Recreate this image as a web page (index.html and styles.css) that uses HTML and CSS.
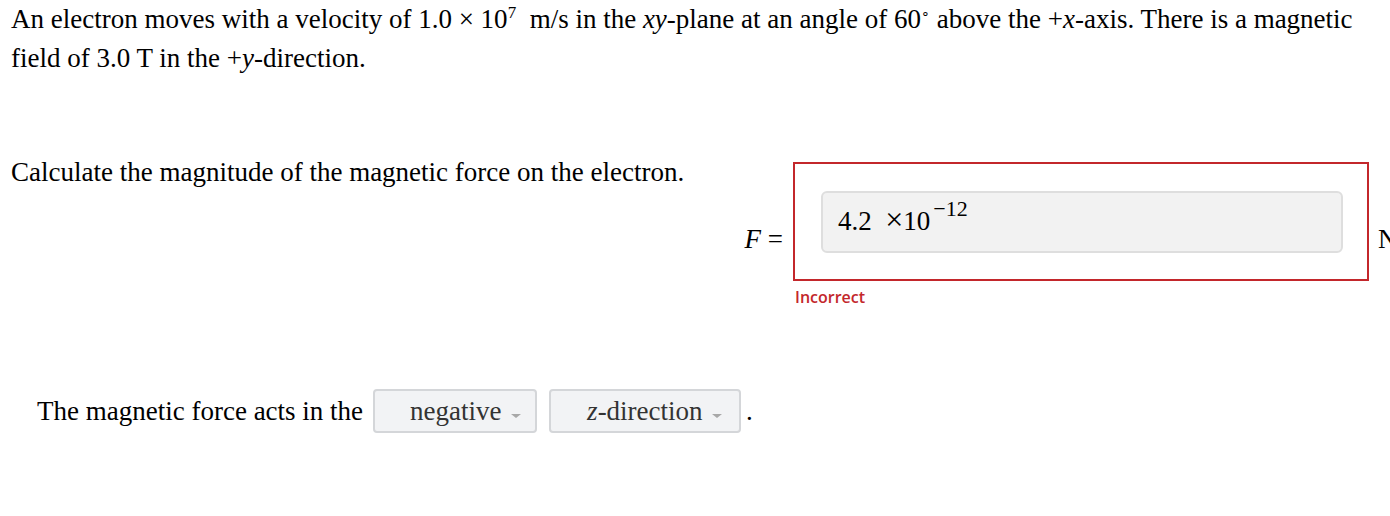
FILE: index.html
```html
<!DOCTYPE html>
<html lang="en">
<head>
    <meta charset="UTF-8">
    <title>Magnetic force</title>
    <link rel="stylesheet" href="styles.css">
</head>
<body>
    <div class="problem">
        <p class="stem">
            An electron moves with a velocity of <span class="math">1.0 × 10<sup>7</sup>&nbsp; m/s</span> in the <span class="math"><i>xy</i>-</span>plane at an angle of <span class="math">60<sup class="deg">∘</sup></span> above the <span class="math">+<i>x</i></span>-axis. There is a magnetic field of <span class="math">3.0 T</span> in the <span class="math">+<i>y</i>-</span>direction.
        </p>

        <div class="part">
            <div class="prompt">Calculate the magnitude of the magnetic force on the electron.</div>
            <div class="equation">
                <span class="lhs"><i>F</i> =</span>
                <div class="answer">
                    <div class="answer-box">
                        <div class="answer-input">4.2 &nbsp;<span class="times">×</span>10<sup>−12</sup></div>
                    </div>
                    <div class="feedback">Incorrect</div>
                </div>
                <span class="unit">N</span>
            </div>
        </div>

        <div class="direction">
            <span>The magnetic force acts in the</span>
            <div class="dropdown">negative <span class="caret"></span></div>
            <div class="dropdown wide"><i>z</i>-direction <span class="caret"></span></div>
            <span class="dot">.</span>
        </div>
    </div>
</body>
</html>
```

FILE: styles.css
```css
body {
    margin: 0;
    font-family: "Liberation Serif", "Times New Roman", serif;
    font-size: 27px;
    color: #000;
    background: #fff;
    overflow: hidden;
}
.problem {
    padding: 0 0 0 11px;
}
.stem {
    margin: 0;
    line-height: 39px;
    width: 1370px;
}
sup {
    font-size: 17px;
    line-height: 0;
}
.deg {
    font-size: 14px;
}
.part {
    display: flex;
    align-items: flex-start;
    margin-top: 84px;
    width: 1500px;
}
.prompt {
    flex: none;
    width: 725px;
    line-height: 20px;
}
.equation {
    flex: none;
    display: flex;
    align-items: flex-start;
}
.lhs {
    flex: none;
    width: 47px;
    text-align: right;
    margin-top: 64px;
    margin-right: 10px;
    line-height: 27px;
    white-space: nowrap;
}
.answer {
    flex: none;
    display: flex;
    flex-direction: column;
}
.answer-box {
    width: 576px;
    height: 119px;
    border: 2px solid #c3272b;
    padding: 27px 0 0 26px;
    box-sizing: border-box;
}
.answer-input {
    width: 522px;
    height: 62px;
    box-sizing: border-box;
    background: #f2f2f2;
    border: 2px solid #dedede;
    border-radius: 6px;
    padding: 15px 0 0 15px;
    line-height: 27px;
}
.times {
    font-size: 32px;
    line-height: 0;
}
.answer-input sup {
    font-size: 22px;
    position: relative;
    top: -4px;
    margin-left: 3px;
}
.feedback {
    font-family: "Open Sans", "Liberation Sans", sans-serif;
    font-weight: 600;
    font-size: 16px;
    line-height: 22px;
    color: #c3272b;
    margin: 5px 0 0 2px;
}
.unit {
    flex: none;
    margin-top: 64px;
    margin-left: 9px;
    line-height: 27px;
}
.direction {
    display: flex;
    align-items: center;
    margin: 81px 0 0 26px;
}
.dropdown {
    display: flex;
    align-items: center;
    height: 44px;
    width: 164px;
    box-sizing: border-box;
    margin-left: 10px;
    padding-left: 35px;
    background: #f2f3f5;
    border: 2px solid #d4d6d9;
    border-radius: 4px;
    color: #333;
}
.dropdown.wide {
    width: 192px;
    margin-left: 12px;
    padding-left: 36px;
}
.caret {
    display: inline-block;
    width: 0;
    height: 0;
    margin: 10px 0 0 9px;
    border-left: 5px solid transparent;
    border-right: 5px solid transparent;
    border-top: 4px solid #a8a8a8;
}
.dot {
    margin-left: 5px;
}
```
